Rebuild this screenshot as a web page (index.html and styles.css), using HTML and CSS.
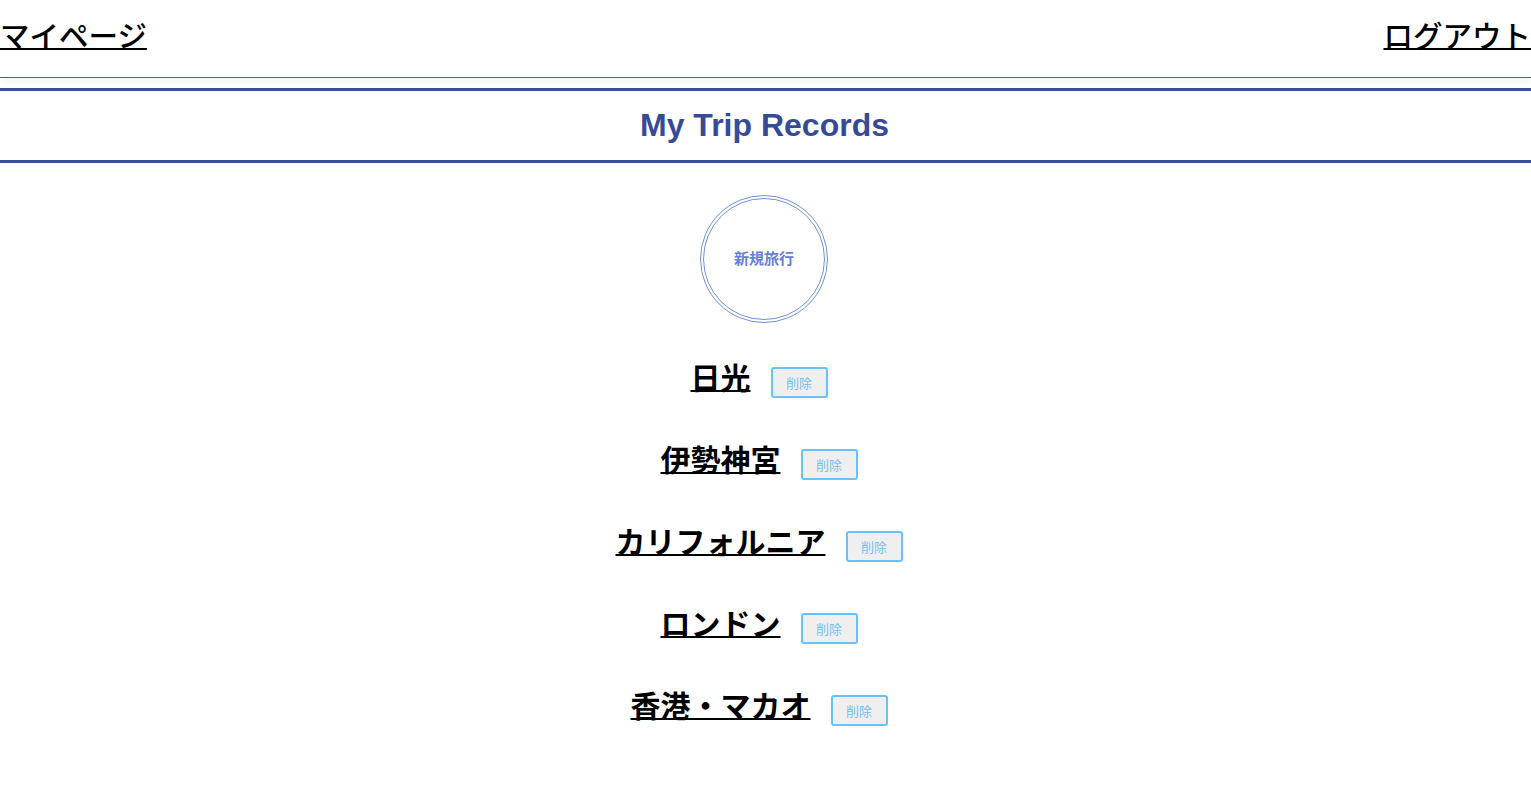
FILE: index.html
```html
<!DOCTYPE html>
<html lang="ja">
<head>
<meta charset="utf-8">
<title>My Trip Records</title>
<link rel="stylesheet" href="styles.css">
</head>
<body>
<header class="site-header">
  <a class="nav-link" href="#">マイページ</a>
  <a class="nav-link" href="#">ログアウト</a>
</header>
<section class="title-bar">
  <h1 class="title">My Trip Records</h1>
</section>
<main class="content">
  <a class="new-trip" href="#">新規旅行</a>
  <ul class="trip-list">
    <li class="trip"><a class="trip-link" href="#">日光</a><button class="delete-btn">削除</button></li>
    <li class="trip"><a class="trip-link" href="#">伊勢神宮</a><button class="delete-btn">削除</button></li>
    <li class="trip"><a class="trip-link" href="#">カリフォルニア</a><button class="delete-btn">削除</button></li>
    <li class="trip"><a class="trip-link" href="#">ロンドン</a><button class="delete-btn">削除</button></li>
    <li class="trip"><a class="trip-link" href="#">香港・マカオ</a><button class="delete-btn">削除</button></li>
  </ul>
</main>
</body>
</html>
```

FILE: styles.css
```css
html, body {
  margin: 0;
  padding: 0;
  background: #ffffff;
}
body {
  font-family: "Noto Sans CJK JP", "Noto Sans", sans-serif;
  color: #000;
}
.site-header {
  display: flex;
  justify-content: space-between;
  align-items: baseline;
  padding: 13px 0 21px;
  border-bottom: 1px solid #56607f;
  box-shadow: 0 3px 7px rgba(0, 0, 0, 0.05);
}
.nav-link {
  font-size: 29.5px;
  line-height: 43px;
  font-weight: 500;
  color: #000;
  text-decoration: underline;
  text-decoration-thickness: 2px;
}
.title-bar {
  margin-top: 10px;
  border-top: 3px solid #3a4f9a;
  border-bottom: 3px solid #3a4f9a;
  height: 69px;
  display: flex;
  align-items: center;
  justify-content: center;
}
.title {
  margin: 0;
  font-family: "Liberation Sans", Arial, sans-serif;
  font-size: 32px;
  font-weight: bold;
  color: #354b98;
  padding-right: 2px;
}
.content {
  display: flex;
  flex-direction: column;
  align-items: center;
  padding-top: 32px;
}
.new-trip {
  box-sizing: border-box;
  width: 128px;
  height: 128px;
  margin-right: 3px;
  padding-bottom: 4px;
  border-radius: 50%;
  border: 4px double #6f8fdf;
  display: flex;
  align-items: center;
  justify-content: center;
  font-size: 15px;
  font-weight: bold;
  color: #6680d4;
  text-decoration: none;
}
.trip-list {
  list-style: none;
  margin: 18px 0 0;
  padding: 0 90px 0 0;
  width: 1441px;
  display: flex;
  flex-direction: column;
}
.trip {
  height: 82px;
  display: flex;
  align-items: center;
  justify-content: center;
}
.trip-link {
  font-size: 30px;
  font-weight: bold;
  line-height: 40px;
  color: #000;
  text-decoration: underline;
  text-decoration-thickness: 2px;
  margin-top: -13px;
}
.delete-btn {
  box-sizing: border-box;
  width: 57px;
  height: 31px;
  margin-left: 20px;
  margin-right: -77px;
  padding: 0;
  background: #efefef;
  border: 2px solid #66c2ff;
  border-radius: 3px;
  font-family: "Noto Sans CJK JP", sans-serif;
  font-size: 13px;
  color: #76bff5;
}
```
